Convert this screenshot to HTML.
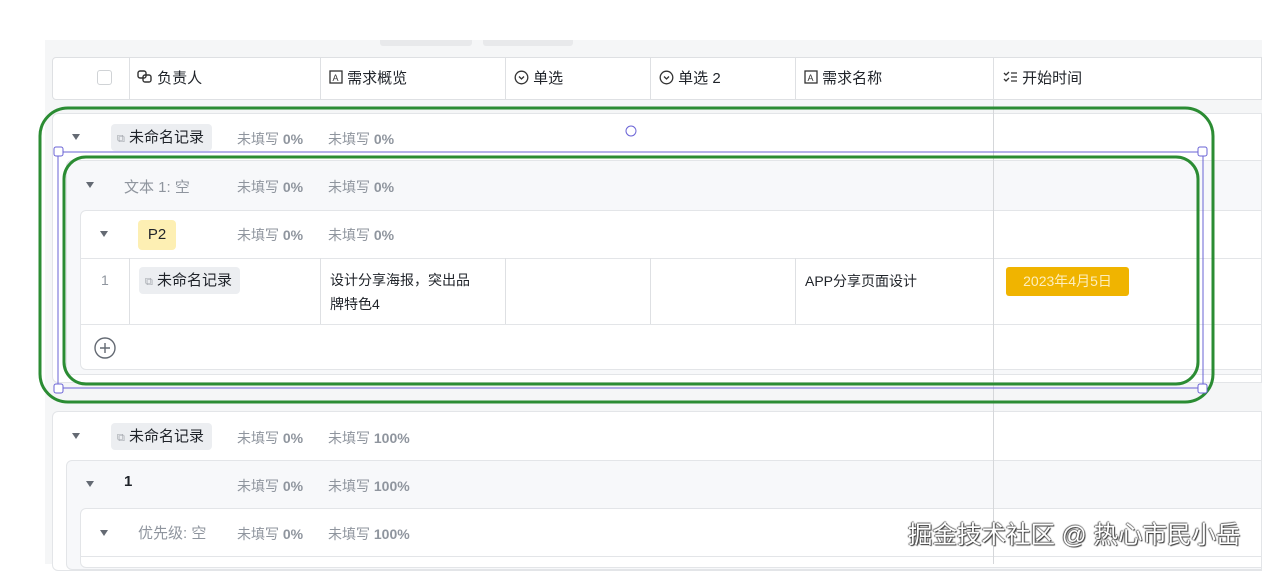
<!DOCTYPE html>
<html><head><meta charset="utf-8"><style>
*{margin:0;padding:0;box-sizing:border-box}
body{width:1262px;height:564px;overflow:hidden;background:#fff;font-family:"Liberation Sans","Noto Sans CJK SC",sans-serif;position:relative;font-size:14px;color:#1f2329}
.a{position:absolute}
.bg{left:45px;top:40px;width:1217px;height:524px;background:#f5f6f7}
.t{position:absolute;white-space:nowrap}
.g{color:#8f959e;font-size:14px}
.g b{color:#8f959e;font-weight:bold}
.tri{position:absolute;width:0;height:0;border-left:4px solid transparent;border-right:4px solid transparent;border-top:6px solid #646a73}
.tag{position:absolute;background:#eceef1;border-radius:4px;height:27px;padding:0 8px 0 6px;line-height:27px;font-size:15px}
.vl{position:absolute;width:1px;background:#dee0e3}
.hd{position:absolute;top:67px;font-size:15px;color:#1f2329;white-space:nowrap}
</style></head><body>
<div class="a bg"></div>
<div class="a" style="left:380px;top:40px;width:92px;height:6px;background:#e8e9eb;border-radius:0 0 3px 3px"></div>
<div class="a" style="left:483px;top:40px;width:90px;height:6px;background:#e8e9eb;border-radius:0 0 3px 3px"></div>
<div class="a" style="left:52px;top:57px;width:1210px;height:43px;background:#fff;border:1px solid #dee0e3;border-radius:4px 0 0 4px"></div>
<div class="vl" style="left:129px;top:57px;height:43px"></div>
<div class="vl" style="left:320px;top:57px;height:43px"></div>
<div class="vl" style="left:505px;top:57px;height:43px"></div>
<div class="vl" style="left:650px;top:57px;height:43px"></div>
<div class="vl" style="left:795px;top:57px;height:43px"></div>
<div class="vl" style="left:993px;top:57px;height:43px"></div>
<div class="a" style="left:97px;top:70px;width:15px;height:15px;border:1px solid #d0d3d6;border-radius:3px"></div>
<div class="hd" style="left:137px"><svg width="16" height="14" viewBox="0 0 16 14" style="vertical-align:-1px"><rect x="1" y="1" width="8" height="7" rx="2" fill="none" stroke="#333" stroke-width="1.4"/><rect x="6" y="5" width="8" height="7" rx="2" fill="none" stroke="#333" stroke-width="1.4"/></svg> 负责人</div>
<div class="hd" style="left:329px"><svg width="14" height="14" viewBox="0 0 14 14" style="vertical-align:-1px"><rect x="1" y="1" width="12" height="12" fill="none" stroke="#333" stroke-width="1.3"/><text x="3.5" y="11" font-size="9" fill="#333" font-family="Liberation Sans">A</text></svg> 需求概览</div>
<div class="hd" style="left:514px"><svg width="15" height="15" viewBox="0 0 15 15" style="vertical-align:-2px"><circle cx="7.5" cy="7.5" r="6.3" fill="none" stroke="#333" stroke-width="1.3"/><path d="M5 6.5l2.5 2.5 2.5-2.5" fill="none" stroke="#333" stroke-width="1.3"/></svg> 单选</div>
<div class="hd" style="left:659px"><svg width="15" height="15" viewBox="0 0 15 15" style="vertical-align:-2px"><circle cx="7.5" cy="7.5" r="6.3" fill="none" stroke="#333" stroke-width="1.3"/><path d="M5 6.5l2.5 2.5 2.5-2.5" fill="none" stroke="#333" stroke-width="1.3"/></svg> 单选 2</div>
<div class="hd" style="left:804px"><svg width="14" height="14" viewBox="0 0 14 14" style="vertical-align:-1px"><rect x="1" y="1" width="12" height="12" fill="none" stroke="#333" stroke-width="1.3"/><text x="3.5" y="11" font-size="9" fill="#333" font-family="Liberation Sans">A</text></svg> 需求名称</div>
<div class="hd" style="left:1003px"><svg width="15" height="14" viewBox="0 0 15 14" style="vertical-align:-1px"><path d="M1 3l2 2 3-3M1 9l2 2 3-3M8 3h6M8 7h6M8 11h6" fill="none" stroke="#333" stroke-width="1.3"/></svg> 开始时间</div>

<div class="a" style="left:52px;top:113px;width:1210px;height:270px;background:#fff;border:1px solid #e3e5e8;border-radius:6px 0 0 6px"></div>
<div class="a" style="left:66px;top:160px;width:1196px;height:215px;background:#f7f8fa;border:1px solid #e3e5e8;border-radius:6px 0 0 6px"></div>
<div class="a" style="left:80px;top:210px;width:1182px;height:160px;background:#fff;border:1px solid #e3e5e8;border-radius:6px 0 0 6px"></div>
<div class="tri" style="left:72px;top:134px"></div>
<div class="tag" style="left:111px;top:124px"><span style="color:#a0a4aa;font-size:11px">⧉</span> 未命名记录</div>
<div class="t g" style="left:237px;top:129px">未填写 <b>0%</b></div>
<div class="t g" style="left:328px;top:129px">未填写 <b>0%</b></div>
<div class="tri" style="left:86px;top:182px"></div>
<div class="t g" style="left:124px;top:176px;font-size:15px">文本 1: 空</div>
<div class="t g" style="left:237px;top:177px">未填写 <b>0%</b></div>
<div class="t g" style="left:328px;top:177px">未填写 <b>0%</b></div>
<div class="tri" style="left:100px;top:231px"></div>
<div class="a" style="left:138px;top:220px;width:38px;height:30px;background:#fdefb3;border-radius:4px;font-size:15px;line-height:30px;text-align:center;color:#1f2329">P2</div>
<div class="t g" style="left:237px;top:225px">未填写 <b>0%</b></div>
<div class="t g" style="left:328px;top:225px">未填写 <b>0%</b></div>
<div class="a" style="left:80px;top:258px;width:1182px;height:1px;background:#e3e5e8"></div>
<div class="a" style="left:80px;top:324px;width:1182px;height:1px;background:#e3e5e8"></div>
<div class="vl" style="left:129px;top:258px;height:66px"></div>
<div class="vl" style="left:320px;top:258px;height:66px"></div>
<div class="vl" style="left:505px;top:258px;height:66px"></div>
<div class="vl" style="left:650px;top:258px;height:66px"></div>
<div class="vl" style="left:795px;top:258px;height:66px"></div>
<div class="t g" style="left:101px;top:272px;font-size:14px">1</div>
<div class="tag" style="left:139px;top:267px"><span style="color:#a0a4aa;font-size:11px">⧉</span> 未命名记录</div>
<div class="t" style="left:330px;top:268px;font-size:14px;line-height:24px">设计分享海报，突出品<br>牌特色4</div>
<div class="t" style="left:805px;top:271px;font-size:14px">APP分享页面设计</div>
<div class="a" style="left:1006px;top:267px;width:123px;height:29px;background:#f0b400;border-radius:3px;color:#fdeebd;font-size:14px;line-height:29px;text-align:center">2023年4月5日</div>
<svg class="a" style="left:93px;top:336px" width="24" height="24" viewBox="0 0 24 24"><circle cx="12" cy="12" r="10" fill="none" stroke="#646a73" stroke-width="1.4"/><path d="M12 7v10M7 12h10" stroke="#646a73" stroke-width="1.4"/></svg>

<div class="a" style="left:52px;top:411px;width:1210px;height:160px;background:#fff;border:1px solid #e3e5e8;border-radius:6px 0 0 6px"></div>
<div class="a" style="left:66px;top:460px;width:1196px;height:110px;background:#f7f8fa;border:1px solid #e3e5e8;border-radius:6px 0 0 6px"></div>
<div class="a" style="left:80px;top:508px;width:1182px;height:60px;background:#fff;border:1px solid #e3e5e8;border-radius:6px 0 0 6px"></div>
<div class="a" style="left:80px;top:556px;width:1182px;height:1px;background:#e3e5e8"></div>
<div class="tri" style="left:72px;top:433px"></div>
<div class="tag" style="left:111px;top:423px"><span style="color:#a0a4aa;font-size:11px">⧉</span> 未命名记录</div>
<div class="t g" style="left:237px;top:428px">未填写 <b>0%</b></div>
<div class="t g" style="left:328px;top:428px">未填写 <b>100%</b></div>
<div class="tri" style="left:86px;top:481px"></div>
<div class="t" style="left:124px;top:473px;font-size:15px;font-weight:bold">1</div>
<div class="t g" style="left:237px;top:476px">未填写 <b>0%</b></div>
<div class="t g" style="left:328px;top:476px">未填写 <b>100%</b></div>
<div class="tri" style="left:100px;top:530px"></div>
<div class="t g" style="left:138px;top:522px;font-size:15px">优先级: 空</div>
<div class="t g" style="left:237px;top:524px">未填写 <b>0%</b></div>
<div class="t g" style="left:328px;top:524px">未填写 <b>100%</b></div>

<div class="vl" style="left:993px;top:100px;height:464px;background:#d5d7da"></div>

<svg class="a" style="left:0;top:0" width="1262" height="564">
<rect x="40" y="108" width="1173" height="294" rx="28" fill="none" stroke="#2b8c33" stroke-width="3"/>
<rect x="64" y="157" width="1134" height="227" rx="22" fill="none" stroke="#2b8c33" stroke-width="3"/>
<rect x="58" y="152" width="1145" height="236" fill="none" stroke="#6a63d6" stroke-width="1"/>
<g fill="#fff" stroke="#6a63d6" stroke-width="1"><rect x="54" y="147" width="9" height="9" rx="2"/><rect x="1198" y="147" width="9" height="9" rx="2"/><rect x="54" y="384" width="9" height="9" rx="2"/><rect x="1198" y="384" width="9" height="9" rx="2"/><circle cx="631" cy="131" r="5"/></g>
</svg>
<div class="t" style="left:908px;top:516px;font-size:24.5px;color:#fff;text-shadow:1px 1px 1px #333,-1px 0 1px #555,0 -1px 1px #777">掘金技术社区 @ 热心市民小岳</div>
</body></html>
